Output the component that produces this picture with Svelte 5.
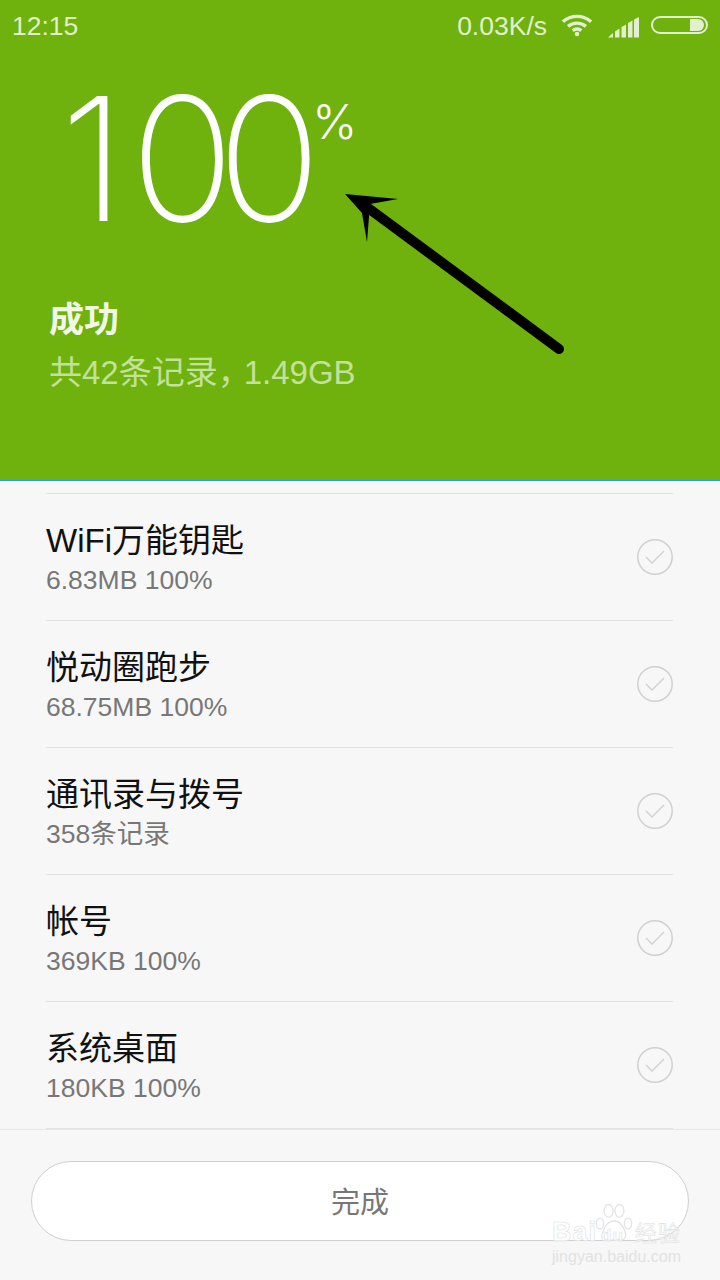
<script>
  const rows = [
    { name: "WiFi万能钥匙", info: "6.83MB 100%" },
    { name: "悦动圈跑步", info: "68.75MB 100%" },
    { name: "通讯录与拨号", info: "358条记录" },
    { name: "帐号", info: "369KB 100%" },
    { name: "系统桌面", info: "180KB 100%" },
  ];
</script>

<div class="page">
  <header class="top">
    <div class="status">
      <span class="time">12:15</span>
      <div class="status-right">
        <span class="speed">0.03K/s</span>
        <svg class="wifi" width="32" height="24" viewBox="0 0 34 24" fill="none" stroke="currentColor" stroke-width="3.6">
          <path d="M2 8.5C10.5 1 23.500 1 32 8.500" />
          <path d="M7.500 13.500C13 8.800 21 8.800 26.500 13.500" />
          <path d="M12.500 18C15.500 15.600 18.500 15.600 21.500 18" />
          <circle cx="17" cy="21.500" r="2.400" fill="currentColor" stroke="none" />
        </svg>
        <svg class="signal" width="31" height="21" viewBox="0 0 31 21" fill="currentColor">
          <path d="M0 20.500L5 16V20.500Z" />
          <path d="M7 14.500L11.500 11.500V20.500H7Z" />
          <path d="M13.500 10L18 7.500V20.500H13.500Z" />
          <path d="M20 6L24.500 3.500V20.500H20Z" />
          <path d="M26 2.500L31 0V20.500H26Z" />
        </svg>
        <div class="battery"><span class="charge"></span></div>
      </div>
    </div>

    <div class="percent">
      <span class="digits"><span class="one">1</span>00</span><span class="sign">%</span>
    </div>
    <div class="result">成功</div>
    <div class="summary">共42条记录<span class="comma">，</span>1.49GB</div>

    <svg class="arrow" width="240" height="190" viewBox="0 0 240 190">
      <path d="M28 31L227 178" stroke="#000" stroke-width="10" stroke-linecap="round" />
      <path d="M13 23L66 28L38 33L35 71L30 42Z" fill="#000" />
    </svg>
  </header>

  <main class="list">
    {#each rows as row}
      <div class="row">
        <div class="texts">
          <div class="name">{row.name}</div>
          <div class="info">{row.info}</div>
        </div>
        <svg class="check" width="36" height="36" viewBox="0 0 36 36" fill="none" stroke="#d0d0d0">
          <circle cx="18" cy="18" r="17.200" stroke-width="1.500" />
          <path d="M9 18L15 24L27 12" stroke-width="1.300" />
        </svg>
      </div>
    {/each}
  </main>

  <footer class="bottom">
    <button class="done">完成</button>
    <div class="watermark">
      <svg class="paw" width="38" height="41" viewBox="0 0 42 44" fill="rgba(255,255,255,0.5)" stroke="#e4e4e4" stroke-width="1.500">
        <ellipse cx="5.500" cy="22" rx="4" ry="6" />
        <ellipse cx="15" cy="8" rx="5" ry="7" />
        <ellipse cx="27" cy="8" rx="5" ry="7" />
        <ellipse cx="36.500" cy="22" rx="4" ry="6" />
        <path d="M21 19C13 19 6 32 9 38C12 43 17 40 21 40C25 40 30 43 33 38C36 32 29 19 21 19Z" />
      </svg>
      <div class="wm-main"><span class="wm-bai">Bai</span><span class="wm-du">du</span><span class="wm-jy">经验</span></div>
      <div class="wm-url">jingyan.baidu.com</div>
    </div>
  </footer>
</div>

<style>
  :global(body) {
    margin: 0;
    background: #f7f7f7;
  }

  .page {
    width: 720px;
    height: 1280px;
    display: flex;
    flex-direction: column;
    overflow: hidden;
    font-family: "Liberation Sans", "Noto Sans CJK SC", sans-serif;
    background: #f7f7f7;
    position: relative;
  }

  .top {
    height: 480px;
    flex: none;
    background: #6fb10d;
    border-bottom: 1px solid #2a9bd8;
    position: relative;
    color: #fff;
  }

  .status {
    height: 52px;
    display: flex;
    align-items: center;
    justify-content: space-between;
    padding: 0 12px;
    color: #e2f0cf;
    font-size: 26.500px;
  }

  .status-right {
    display: flex;
    align-items: center;
  }

  .speed {
    margin-right: 14px;
  }

  .wifi {
    margin-right: 15px;
    margin-top: -3px;
  }

  .signal {
    margin-right: 12px;
    margin-top: 2px;
  }

  .battery {
    width: 51px;
    height: 14px;
    border: 2px solid #e2f0cf;
    border-radius: 10px;
    display: flex;
    justify-content: flex-end;
    padding: 0 2px 0 0;
    align-items: center;
    margin-top: -2px;
  }

  .charge {
    width: 14px;
    height: 12px;
    background: #e2f0cf;
    border-radius: 0 6px 6px 0;
  }

  .percent {
    height: 243px;
    display: flex;
    align-items: flex-start;
    padding-left: 60px;
    font-family: Inter, sans-serif;
  }

  .digits {
    font-size: 172px;
    font-weight: 240;
    line-height: 186px;
    letter-spacing: -17px;
    margin-top: 13px;
    white-space: nowrap;
  }

  .one {
    margin-right: 22px;
  }

  .sign {
    font-size: 48px;
    font-weight: 300;
    line-height: 56px;
    margin-top: 42px;
    margin-left: 8px;
  }

  .result {
    padding-left: 49px;
    font-size: 35px;
    font-weight: 700;
    line-height: 44px;
    font-family: "Noto Sans CJK SC", sans-serif;
    color: #f2f8e8;
  }

  .summary {
    padding-left: 49px;
    font-size: 33px;
    line-height: 40px;
    margin-top: 14px;
    color: #c3e09c;
  }

  .comma {
    letter-spacing: -7px;
  }

  .arrow {
    position: absolute;
    left: 332px;
    top: 171px;
  }

  .list {
    flex: 1;
    padding: 12px 47px 0 46px;
    min-height: 0;
  }

  .row {
    height: 126px;
    border-top: 1px solid #e2e2e2;
    display: flex;
    align-items: center;
    justify-content: space-between;
  }

  .row:last-child {
    border-bottom: 1px solid #e2e2e2;
  }

  .texts {
    padding-top: 5px;
  }

  .name {
    font-size: 33px;
    line-height: 40px;
    color: #111;
    font-weight: 400;
  }

  .info {
    font-size: 26.500px;
    line-height: 36px;
    color: #777;
    margin-top: 1px;
  }

  .bottom {
    height: 151px;
    flex: none;
    border-top: 1px solid #e6e6e6;
    padding: 31px 31px 0;
    box-sizing: border-box;
    position: relative;
  }

  .done {
    width: 100%;
    height: 80px;
    background: #fff;
    border: 1px solid #cfcfcf;
    border-radius: 40px;
    font-family: "Noto Sans CJK SC", sans-serif;
    font-size: 29px;
    color: #777;
    padding: 0 0 2px;
  }

  .watermark {
    position: absolute;
    left: 552px;
    top: 70px;
    width: 130px;
    height: 76px;
  }

  .paw {
    position: absolute;
    left: 43px;
    top: 3px;
  }

  .wm-main {
    position: absolute;
    left: 0;
    top: 16px;
    white-space: nowrap;
    font-size: 27px;
    font-weight: 700;
    line-height: 30px;
    letter-spacing: 1px;
    -webkit-text-stroke: 0.6px #e0e0e0;
    color: rgba(255, 255, 255, 0.7);
  }

  .wm-du {
    font-size: 17px;
    margin-left: 4px;
    margin-right: 11px;
  }

  .wm-jy {
    font-size: 22px;
    font-weight: 400;
    font-family: "Noto Sans CJK SC", sans-serif;
  }

  .wm-url {
    position: absolute;
    left: 0;
    top: 47px;
    font-size: 16px;
    white-space: nowrap;
    line-height: 20px;
    color: #e2e2e2;
  }
</style>
